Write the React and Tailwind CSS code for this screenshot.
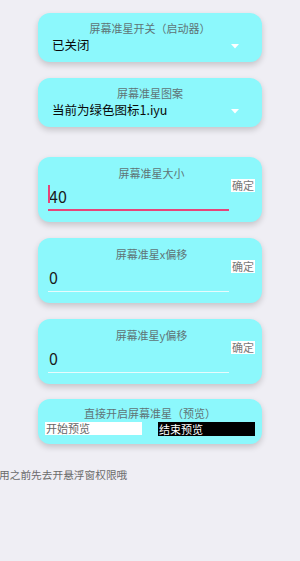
import React from "react";

const font = { fontFamily: '"Noto Sans CJK SC", "Noto Sans", sans-serif' };

function Select({ title, value }) {
  return (
    <div className="w-[224px] h-[49px] rounded-[12px] bg-[#8cf8fc] shadow-[0_3px_6px_rgba(0,0,0,0.18)] flex flex-col px-[14px] pt-[8px]">
      <div className="text-center text-[11px] leading-[15px] text-[#5f7476]">{title}</div>
      <div className="flex items-center justify-between h-[18px]">
        <span className="text-[12.5px] leading-[18px] text-[#0a0a0a]">{value}</span>
        <svg width="8" height="5" viewBox="0 0 8 5" className="mr-[9px] mt-[2px]">
          <path d="M0 0 L8 0 L4 4.5 Z" fill="#ffffff" />
        </svg>
      </div>
    </div>
  );
}

function InputCard({ title, value, active }) {
  return (
    <div className="w-[224px] h-[65px] rounded-[12px] bg-[#8cf8fc] shadow-[0_3px_6px_rgba(0,0,0,0.18)] flex flex-col pl-[10px] pr-[7px] pt-[9px]">
      <div className="text-center text-[11px] leading-[15px] text-[#5f7476]">{title}</div>
      <div className="flex items-start mt-[1px]">
        <div className="w-[181px] flex flex-col">
          <div className="h-[25px] flex items-center relative">
            {active && <div className="absolute left-0 top-[3px] w-[2px] h-[18px] bg-[#e6457a]" />}
            <span className="text-[16px] leading-[20px] text-[#1a1a1a] pl-[1px] mt-[2px]">{value}</span>
          </div>
          <div className={active ? "h-[2px] bg-[#e6457a] mt-[2px]" : "h-[1px] bg-[#e8fbfc] mt-[3px]"} />
        </div>
        <div className="ml-auto mt-[-3px] bg-white text-[11px] leading-[13px] text-[#777] px-[1px] h-[13px]">确定</div>
      </div>
    </div>
  );
}

export default function App() {
  return (
    <div className="min-h-[561px] w-[300px] bg-[#efeef4] flex flex-col" style={font}>
      <div className="flex flex-col items-center pt-[13px]">
        <Select title="屏幕准星开关（启动器）" value="已关闭" />
        <div className="h-[16px]" />
        <Select title="屏幕准星图案" value="当前为绿色图标1.iyu" />
        <div className="h-[30px]" />
        <InputCard title="屏幕准星大小" value="40" active />
        <div className="h-[16px]" />
        <InputCard title="屏幕准星x偏移" value="0" />
        <div className="h-[16px]" />
        <InputCard title="屏幕准星y偏移" value="0" />
        <div className="h-[15px]" />
        <div className="w-[224px] h-[45px] rounded-[12px] bg-[#8cf8fc] shadow-[0_3px_6px_rgba(0,0,0,0.18)] flex flex-col pt-[7px] px-[7px]">
          <div className="text-center text-[11px] leading-[15px] text-[#5f7476]">直接开启屏幕准星（预览）</div>
          <div className="flex justify-between mt-[1px]">
            <div className="w-[97px] h-[13px] bg-white text-[11px] leading-[13px] text-[#666] pl-[1px]">开始预览</div>
            <div className="w-[97px] h-[14px] bg-black text-[11px] leading-[14px] text-white pl-[1px]">结束预览</div>
          </div>
        </div>
      </div>
      <div className="mt-[24px] text-[10.7px] leading-[14px] text-[#6b6b6b] ml-[-1px]">用之前先去开悬浮窗权限哦</div>
    </div>
  );
}
